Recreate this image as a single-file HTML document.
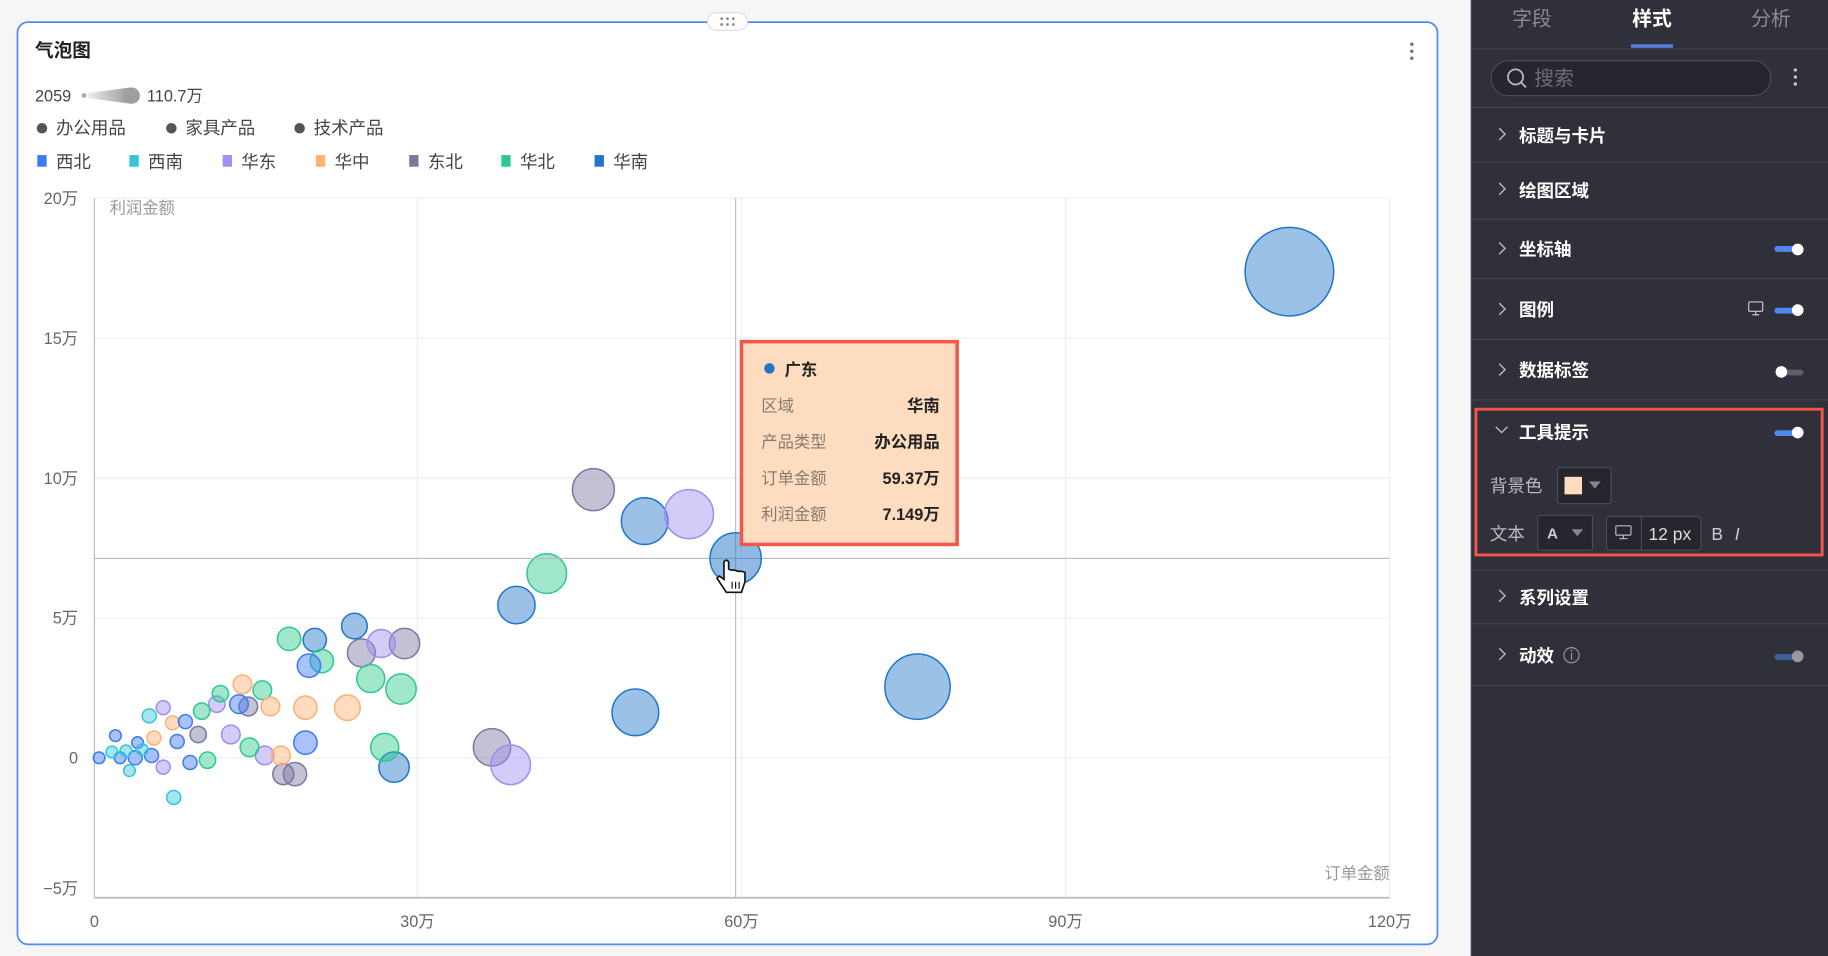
<!DOCTYPE html>
<html><head><meta charset="utf-8"><style>
html,body{margin:0;padding:0;width:1828px;height:956px;overflow:hidden;background:#f5f5f5}
svg{display:block}
text{font-family:"Liberation Sans","Noto Sans CJK SC",sans-serif}
</style></head><body>
<svg width="1828" height="956" viewBox="0 0 1568 820" preserveAspectRatio="none" xmlns="http://www.w3.org/2000/svg">
<rect x="0" y="0" width="1262" height="820" fill="#f6f6f6"/>
<rect x="15" y="19" width="1218" height="791" rx="9" fill="#fff" stroke="#4e8df5" stroke-width="1.5"/>
<rect x="607" y="11" width="34" height="15" rx="7.5" fill="#fff" stroke="#ddd"/>
<g fill="#888"><circle cx="619" cy="16" r="1.2"/><circle cx="624" cy="16" r="1.2"/><circle cx="629" cy="16" r="1.2"/><circle cx="619" cy="21" r="1.2"/><circle cx="624" cy="21" r="1.2"/><circle cx="629" cy="21" r="1.2"/></g>
<g fill="#777"><circle cx="1211" cy="38" r="1.5"/><circle cx="1211" cy="44" r="1.5"/><circle cx="1211" cy="50" r="1.5"/></g>
<text x="30" y="49" font-size="16" font-weight="bold" fill="#222">气泡图</text>
<text x="30" y="87" font-size="14" fill="#444">2059</text>
<defs><linearGradient id="g" x1="0" x2="1"><stop offset="0" stop-color="#f0f0f0"/><stop offset="1" stop-color="#999"/></linearGradient></defs>
<circle cx="72" cy="82" r="2" fill="#aaa"/><path d="M74 80 L112 75 L112 89 L74 84Z" fill="url(#g)"/><circle cx="113" cy="82" r="7" fill="#9e9e9e"/>
<text x="126" y="87" font-size="14" fill="#444">110.7万</text>
<g font-size="15" fill="#444"><circle cx="36" cy="110" r="4.5" fill="#555"/><text x="48" y="115">办公用品</text>
<circle cx="147" cy="110" r="4.5" fill="#555"/><text x="159" y="115">家具产品</text>
<circle cx="257" cy="110" r="4.5" fill="#555"/><text x="269" y="115">技术产品</text></g>
<g font-size="15" fill="#444">
<rect x="32" y="133" width="8" height="10" fill="#3d7bf5"/><text x="48" y="144">西北</text>
<rect x="111" y="133" width="8" height="10" fill="#36c5d9"/><text x="127" y="144">西南</text>
<rect x="191" y="133" width="8" height="10" fill="#a08ef0"/><text x="207" y="144">华东</text>
<rect x="271" y="133" width="8" height="10" fill="#ffb072"/><text x="287" y="144">华中</text>
<rect x="351" y="133" width="8" height="10" fill="#7a78a0"/><text x="367" y="144">东北</text>
<rect x="430" y="133" width="8" height="10" fill="#2ec98f"/><text x="446" y="144">华北</text>
<rect x="510" y="133" width="8" height="10" fill="#2176c9"/><text x="526" y="144">华南</text></g>
<g stroke="#eee" stroke-width="1">
<line x1="81" y1="170" x2="1192" y2="170"/><line x1="81" y1="290" x2="1192" y2="290"/><line x1="81" y1="410" x2="1192" y2="410"/><line x1="81" y1="530" x2="1192" y2="530"/><line x1="81" y1="650" x2="1192" y2="650"/>
<line x1="358" y1="170" x2="358" y2="770"/><line x1="636" y1="170" x2="636" y2="770"/><line x1="914" y1="170" x2="914" y2="770"/><line x1="1192" y1="170" x2="1192" y2="770"/></g>
<line x1="81" y1="170" x2="81" y2="770" stroke="#bbb"/>
<line x1="81" y1="770" x2="1192" y2="770" stroke="#bbb" stroke-width="1.5"/>
<g font-size="14" fill="#666" text-anchor="end"><text x="67" y="175">20万</text><text x="67" y="295">15万</text><text x="67" y="415">10万</text><text x="67" y="535">5万</text><text x="67" y="655">0</text><text x="67" y="767">−5万</text></g>
<g font-size="14" fill="#666" text-anchor="middle"><text x="81" y="795">0</text><text x="358" y="795">30万</text><text x="636" y="795">60万</text><text x="914" y="795">90万</text><text x="1192" y="795">120万</text></g>
<text x="94" y="183" font-size="14" fill="#999">利润金额</text>
<text x="1192" y="754" font-size="14" fill="#999" text-anchor="end">订单金额</text>
<g stroke-width="1.3" fill-opacity="0.45">
<g fill="#2176c9" stroke="#2176c9"><circle cx="1106" cy="233" r="38"/><circle cx="787" cy="589" r="28"/><circle cx="553" cy="447" r="20"/><circle cx="545" cy="611" r="20"/><circle cx="443" cy="519" r="16"/><circle cx="338" cy="658" r="13"/><circle cx="304" cy="537" r="11"/><circle cx="270" cy="549" r="10"/></g>
<g fill="#7a78a0" stroke="#7a78a0"><circle cx="509" cy="420" r="18"/><circle cx="422" cy="641" r="16"/><circle cx="347" cy="552" r="13"/><circle cx="310" cy="560" r="12"/><circle cx="253" cy="664" r="10"/><circle cx="243" cy="664" r="9"/><circle cx="170" cy="630" r="7"/><circle cx="213" cy="606" r="8"/></g>
<g fill="#a08ef0" stroke="#a08ef0"><circle cx="591" cy="441" r="21"/><circle cx="438" cy="656" r="17"/><circle cx="327" cy="552" r="12"/><circle cx="227" cy="648" r="8"/><circle cx="198" cy="630" r="8"/><circle cx="140" cy="658" r="6"/><circle cx="140" cy="607" r="6"/><circle cx="186" cy="604" r="7"/></g>
<g fill="#2ec98f" stroke="#2ec98f"><circle cx="469" cy="492" r="17"/><circle cx="344" cy="591" r="13"/><circle cx="330" cy="641" r="12"/><circle cx="318" cy="582" r="12"/><circle cx="276" cy="567" r="10"/><circle cx="248" cy="548" r="10"/><circle cx="214" cy="641" r="8"/><circle cx="178" cy="652" r="7"/><circle cx="225" cy="592" r="8"/><circle cx="173" cy="610" r="7"/><circle cx="189" cy="595" r="7"/></g>
<g fill="#ffb072" stroke="#ffb072"><circle cx="298" cy="607" r="11"/><circle cx="262" cy="607" r="10"/><circle cx="241" cy="648" r="8"/><circle cx="208" cy="587" r="8"/><circle cx="148" cy="620" r="6"/><circle cx="132" cy="633" r="6"/><circle cx="232" cy="606" r="8"/></g>
<g fill="#3d7bf5" stroke="#3d7bf5"><circle cx="262" cy="637" r="10"/><circle cx="265" cy="571" r="10"/><circle cx="163" cy="654" r="6"/><circle cx="159" cy="619" r="6"/><circle cx="99" cy="631" r="5"/><circle cx="116" cy="650" r="6"/><circle cx="85" cy="650" r="5"/><circle cx="103" cy="650" r="5"/><circle cx="205" cy="604" r="8"/><circle cx="130" cy="648" r="6"/><circle cx="152" cy="636" r="6"/><circle cx="118" cy="637" r="5"/></g>
<g fill="#36c5d9" stroke="#36c5d9"><circle cx="149" cy="684" r="6"/><circle cx="111" cy="661" r="5"/><circle cx="128" cy="614" r="6"/><circle cx="96" cy="645" r="5"/><circle cx="108" cy="644" r="5"/><circle cx="122" cy="643" r="5"/></g>
</g>
<line x1="631" y1="170" x2="631" y2="770" stroke="#bbb"/>
<line x1="81" y1="479" x2="1192" y2="479" stroke="#bbb"/>
<circle cx="631" cy="479" r="22" fill="#2176c9" fill-opacity="0.5" stroke="#2176c9" stroke-width="1.3"/>
<path d="M621 482 L621 497 L617 494 L615 496 L623 508 L636 508 L639 499 L639 491 L636 490 L633 490 L630 489 L627 489 L625 488 L625 482 Q623 479 621 482Z" fill="#fff" stroke="#111" stroke-width="1.4"/>
<g stroke="#111" stroke-width="1"><line x1="628" y1="499" x2="628" y2="505"/><line x1="631" y1="499" x2="631" y2="505"/><line x1="634" y1="499" x2="634" y2="505"/></g>
<rect x="636" y="293" width="185" height="174" fill="#fddcbf" stroke="#f4544a" stroke-width="3"/>
<circle cx="660" cy="316" r="4.5" fill="#2176c9"/>
<text x="673" y="322" font-size="14" font-weight="bold" fill="#222">广东</text>
<g font-size="14" fill="#8a7a6e"><text x="653" y="353">区域</text><text x="653" y="384">产品类型</text><text x="653" y="415">订单金额</text><text x="653" y="446">利润金额</text></g>
<g font-size="14" font-weight="bold" fill="#222" text-anchor="end"><text x="806" y="353">华南</text><text x="806" y="384">办公用品</text><text x="806" y="415">59.37万</text><text x="806" y="446">7.149万</text></g>
<rect x="1262" y="0" width="306" height="820" fill="#2f3039"/>
<line x1="1262" y1="0" x2="1262" y2="820" stroke="#45464f"/>
<g font-size="17" text-anchor="middle"><text x="1314" y="22" fill="#8a8b93">字段</text><text x="1417" y="22" fill="#fff" font-weight="bold">样式</text><text x="1519" y="22" fill="#8a8b93">分析</text></g>
<rect x="1399" y="38" width="36" height="3" fill="#5b7ee6"/>
<line x1="1262" y1="42" x2="1568" y2="42" stroke="#45464f"/>
<rect x="1279" y="52" width="240" height="30" rx="15" fill="#26272e" stroke="#4b4c56"/>
<circle cx="1300" cy="66" r="6.5" fill="none" stroke="#bbb" stroke-width="1.5"/><line x1="1305" y1="71" x2="1309" y2="75" stroke="#bbb" stroke-width="1.5"/>
<text x="1316" y="73" font-size="17" fill="#6c6d75">搜索</text>
<g fill="#ccc"><circle cx="1540" cy="60" r="1.4"/><circle cx="1540" cy="66" r="1.4"/><circle cx="1540" cy="72" r="1.4"/></g>
<g stroke="#42434c"><line x1="1262" y1="92" x2="1568" y2="92"/><line x1="1262" y1="139" x2="1568" y2="139"/><line x1="1262" y1="188" x2="1568" y2="188"/><line x1="1262" y1="239" x2="1568" y2="239"/><line x1="1262" y1="291" x2="1568" y2="291"/><line x1="1262" y1="343" x2="1568" y2="343"/><line x1="1262" y1="489" x2="1568" y2="489"/><line x1="1262" y1="535" x2="1568" y2="535"/><line x1="1262" y1="588" x2="1568" y2="588"/></g>
<g fill="none" stroke="#bbb" stroke-width="1.2"><path d="M1286 110 L1291 115 L1286 120"/><path d="M1286 157 L1291 162 L1286 167"/><path d="M1286 208 L1291 213 L1286 218"/><path d="M1286 260 L1291 265 L1286 270"/><path d="M1286 312 L1291 317 L1286 322"/><path d="M1283 366 L1288 371 L1293 366"/><path d="M1286 506 L1291 511 L1286 516"/><path d="M1286 556 L1291 561 L1286 566"/></g>
<g font-size="15" font-weight="bold" fill="#fff"><text x="1303" y="122">标题与卡片</text><text x="1303" y="169">绘图区域</text><text x="1303" y="219">坐标轴</text><text x="1303" y="271">图例</text><text x="1303" y="323">数据标签</text><text x="1303" y="376">工具提示</text><text x="1303" y="518">系列设置</text><text x="1303" y="568">动效</text></g>
<circle cx="1348" cy="562" r="6.5" fill="none" stroke="#999"/><line x1="1348" y1="560" x2="1348" y2="566" stroke="#999"/><circle cx="1348" cy="558" r="0.8" fill="#999"/>
<g><rect x="1522" y="211" width="25" height="5" rx="2.5" fill="#4f86ef"/><circle cx="1542" cy="214" r="5" fill="#fff"/>
<rect x="1522" y="264" width="25" height="5" rx="2.5" fill="#4f86ef"/><circle cx="1542" cy="266" r="5" fill="#fff"/>
<rect x="1524" y="317" width="23" height="5" rx="2.5" fill="#5f6069"/><circle cx="1528" cy="319" r="5" fill="#fff"/>
<rect x="1522" y="369" width="25" height="5" rx="2.5" fill="#4f86ef"/><circle cx="1542" cy="371" r="5" fill="#fff"/>
<rect x="1522" y="561" width="25" height="5" rx="2.5" fill="#3e5e9c"/><circle cx="1542" cy="563" r="5" fill="#999"/></g>
<rect x="1500" y="259" width="12" height="8" rx="1" fill="none" stroke="#ccc"/><line x1="1503" y1="270" x2="1509" y2="270" stroke="#ccc"/><line x1="1506" y1="267" x2="1506" y2="270" stroke="#ccc"/>
<rect x="1266" y="351" width="297" height="125" fill="none" stroke="#f4544a" stroke-width="2.5"/>
<text x="1278" y="422" font-size="15" fill="#bbb">背景色</text>
<rect x="1336" y="401" width="46" height="31" rx="2" fill="#26272e" stroke="#4b4c56"/>
<rect x="1342" y="409" width="15" height="15" fill="#fddcbf"/><path d="M1363 413 L1373 413 L1368 419Z" fill="#888"/>
<text x="1278" y="463" font-size="15" fill="#bbb">文本</text>
<rect x="1319" y="442" width="47" height="30" rx="2" fill="#26272e" stroke="#4b4c56"/>
<text x="1327" y="462" font-size="13" font-weight="bold" fill="#ccc">A</text><path d="M1348 454 L1358 454 L1353 460Z" fill="#888"/>
<rect x="1378" y="443" width="81" height="29" rx="3" fill="#26272e" stroke="#4b4c56"/><line x1="1408" y1="443" x2="1408" y2="472" stroke="#4b4c56"/>
<rect x="1386" y="451" width="13" height="8" rx="1" fill="none" stroke="#bbb"/><line x1="1389" y1="462" x2="1396" y2="462" stroke="#bbb"/><line x1="1392.5" y1="459" x2="1392.5" y2="462" stroke="#bbb"/>
<text x="1414" y="463" font-size="15" fill="#ddd">12 px</text>
<text x="1468" y="463" font-size="15" fill="#ccc">B</text><text x="1488" y="463" font-size="15" font-style="italic" fill="#ccc">I</text>
</svg>
</body></html>
